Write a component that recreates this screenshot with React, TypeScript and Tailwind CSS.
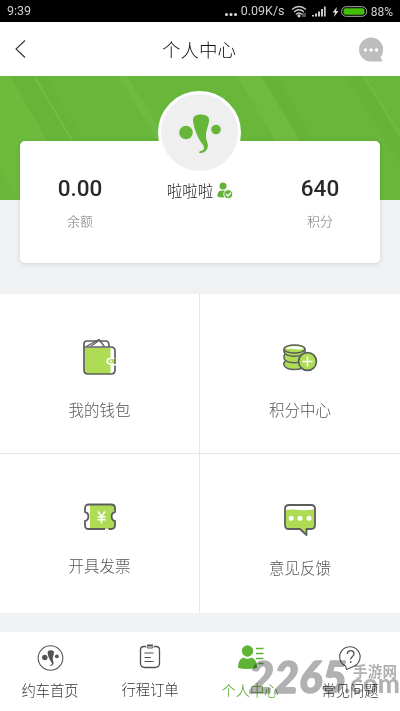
import React from 'react'

interface MenuItem {
  label: string
  icon: React.ReactNode
  cell: string
  labelGap: string
}

interface Tab {
  label: string
  icon: React.ReactNode
  active?: boolean
  offset: string
}

function LogoMark() {
  return (
    <>
      <circle cx="14" cy="37.500" r="6.800" />
      <circle cx="44" cy="34.500" r="4.800" />
      <path d="M21 25C20.500 18 36 18 37 24C37.500 29.500 33.500 35.500 34 41.500C34 46.500 37 48.500 35.500 53C34 57 31 58.500 27.500 58C26.500 57 27.500 56 29.500 55.700C33 55 32.500 51.500 30 48.500C26.500 44 21.500 33.500 21 25Z" />
    </>
  )
}

function WalletIcon() {
  return (
    <svg className="w-[36px] h-[38px]" viewBox="0 0 36 38" fill="none">
      <path d="M2.500 10H30V36H5L2.500 34Z" fill="#aedd55" />
      <path d="M28.500 10H31V36H28.500Z" fill="#fff" />
      <g stroke="#5c5e5d" strokeWidth="1.700" strokeLinecap="round" strokeLinejoin="round">
        <path d="M2 9V32Q2 36 6 36H29Q33 36 33 32V28M33 20V13Q33 9 29 9H2V6Q2 3 5 3H24Q27 3 27 8" />
        <path d="M5 8L17 1.500L22 8M9 8L15 4" strokeWidth="1.300" />
      </g>
      <path d="M33 20.500H28A2.700 2.700 0 0 0 28 26H33" fill="#aedd55" stroke="#fff" strokeWidth="1.700" />
      <path d="M33 20.500V26" stroke="#5c5e5d" strokeWidth="1.500" />
      <circle cx="29" cy="23.200" r="1" fill="#fff" />
    </svg>
  )
}

function CoinsIcon() {
  return (
    <svg className="w-[36px] h-[30px]" viewBox="0 0 36 30" fill="none" stroke="#5c5e5d" strokeWidth="1.500">
      <path d="M3 18Q1.500 19.500 2 22C4 28 21 28 23 22V18" fill="#aedd55" />
      <path d="M3 11Q1.500 13 2 15.500C4 21 21 21 23 15.500V12" fill="#aedd55" />
      <path d="M2 6V9C4 14.500 21 14.500 23 9V6" fill="#aedd55" />
      <ellipse cx="12.500" cy="6" rx="10.500" ry="4" fill="#aedd55" />
      <path d="M4 6C5 2.500 19 2.500 21.500 5.500C17 8 9 5 4 6Z" fill="#fff" stroke="none" />
      <circle cx="25.500" cy="18.500" r="8.900" fill="#aedd55" strokeWidth="1.700" />
      <path d="M25.500 13.500V23.500M20.500 18.500H30.500" stroke="#fff" strokeWidth="1.500" />
    </svg>
  )
}

function InvoiceIcon() {
  return (
    <svg className="w-[34px] h-[28px]" viewBox="0 0 34 28" fill="none">
      <path d="M7 1.500H28Q32 1.500 32 5V8C27 9 27 17 32 18V23Q32 26 28 26H7Z" fill="#aedd55" />
      <path d="M22 26H5Q2 26 2 22V18C6.500 17 6.500 10 2 9V5Q2 1.500 6 1.500H28Q32 1.500 32 5V9C27.500 10 27.500 17 32 18V22Q32 26 28 26H25.500" stroke="#5c5e5d" strokeWidth="1.800" strokeLinejoin="round" />
      <path d="M15 8.500L18.500 13.500L22 8.500M14.500 14H22.500M14.500 16.700H22.500M18.500 13.500V20.500" stroke="#fff" strokeWidth="1.500" />
    </svg>
  )
}

function FeedbackIcon() {
  return (
    <svg className="w-[34px] h-[34px]" viewBox="0 0 34 34" fill="none">
      <path d="M2.500 7C12 5 20 9 31.500 6V22Q31 26 28 26H23V31L16 26H6L2.500 23Z" fill="#aedd55" />
      <path d="M6 2H28Q32 2 32 6V22Q32 26 28 26H23.500V32L17 26H6Q2 26 2 22V6Q2 2 6 2Z" stroke="#5c5e5d" strokeWidth="1.800" strokeLinejoin="round" />
      <g fill="#fff">
        <circle cx="8.200" cy="15.300" r="2.500" />
        <circle cx="17" cy="15.300" r="2.500" />
        <circle cx="26" cy="15.300" r="2.500" />
      </g>
    </svg>
  )
}

const menuItems: MenuItem[] = [
  { label: '我的钱包', icon: <WalletIcon />, cell: 'border-r border-b pt-[44px]', labelGap: 'mt-[21px]' },
  { label: '积分中心', icon: <CoinsIcon />, cell: 'border-b pt-[49px]', labelGap: 'mt-[24px]' },
  { label: '开具发票', icon: <InvoiceIcon />, cell: 'border-r pt-[49px]', labelGap: 'mt-[22px]' },
  { label: '意见反馈', icon: <FeedbackIcon />, cell: 'pt-[49px]', labelGap: 'mt-[18px]' },
]

const tabs: Tab[] = [
  {
    label: '约车首页',
    offset: 'pt-[1px]',
    icon: (
      <svg className="w-[28px] h-[28px]" viewBox="0 0 28 28">
        <circle cx="14.500" cy="14" r="12.300" fill="none" stroke="#555" strokeWidth="1.100" />
        <g fill="#555" transform="translate(3.200 -1.500) scale(0.400)"><LogoMark /></g>
      </svg>
    ),
  },
  {
    label: '行程订单',
    offset: '',
    icon: (
      <svg className="w-[28px] h-[28px]" viewBox="0 0 28 28" fill="none" stroke="#505050">
        <path d="M10 3.500H8Q4.500 3.500 4.500 7V20Q4.500 24.500 9 24.500H19Q23.500 24.500 23.500 20V7Q23.500 3.500 20 3.500H18" strokeWidth="1.300" />
        <path d="M10 3.500Q11 5 12 5H16Q17 5 18 3.500M8.500 10H17.500M8.500 14.500H15M8.500 18.500H17.500" />
        <path d="M11 2.500H17" strokeWidth="2" />
      </svg>
    ),
  },
  {
    label: '个人中心',
    offset: 'pt-[1px]',
    active: true,
    icon: (
      <svg className="w-[28px] h-[28px]" viewBox="0 0 28 28" fill="#5fb336">
        <circle cx="11.500" cy="7" r="5.700" />
        <path d="M2 24Q2 15 7.500 13.500Q11.500 16 15.500 13.500Q21 15 21 24Q11.500 26 2 24Z" />
        <path d="M20 4.500H27.500M20 9.500H27.500M20 14.500H27.500M22.500 19.500H27.500" stroke="#5fb336" strokeWidth="1.500" />
      </svg>
    ),
  },
  {
    label: '常见问题',
    offset: 'pt-[1px]',
    icon: (
      <svg className="w-[28px] h-[28px]" viewBox="0 0 28 28" fill="none" stroke="#505050" strokeWidth="1.100">
        <path d="M10.500 25.500L9.800 22.300A10.200 10.200 0 1 1 18 22.300Z" strokeLinejoin="round" />
        <path d="M11.300 10C11.300 5.500 18 5.500 18 10C18 12.500 14.700 12.500 14.700 15.500M14.700 17V19" strokeWidth="1.300" />
      </svg>
    ),
  },
]

function StatusBar() {
  return (
    <div className="h-[22px] bg-black flex items-center justify-between pl-[7px] pr-[7px] pt-[1px] text-[12.500px] font-normal text-[#d0d0d0] font-[Roboto,sans-serif]">
      <span>9:39</span>
      <div className="flex items-center">
        <svg className="w-[14px] h-[12px] mr-[3px]" viewBox="0 0 14 12" fill="#ddd">
          <circle cx="2.500" cy="8.500" r="1.500" />
          <circle cx="7" cy="8.500" r="1.500" />
          <circle cx="11.500" cy="8.500" r="1.500" />
        </svg>
        <span className="w-[45px] text-[12.500px] whitespace-nowrap">0.09K/s</span>
        <svg className="w-[16px] h-[13px] ml-[5px]" viewBox="0 0 16 13" fill="none" stroke="#ccc" strokeWidth="1.300">
          <path d="M1 4.500Q8 -1.500 15 4.500M3 7Q8 2.500 13 7M5 9.500Q8 6.500 11 9.500" />
          <circle cx="8" cy="10.800" r="1" fill="#ccc" />
          <path d="M12 8V12M14 8V12" strokeWidth="0.800" />
        </svg>
        <svg className="w-[14px] h-[11px] ml-[5px]" viewBox="0 0 14 11" fill="#ccc">
          <path d="M0 9H2V10.500H0ZM3 7.500H5V10.500H3ZM6 5.500H8V10.500H6ZM9 3H11V10.500H9ZM12 0.500H13.700V10.500H12Z" />
        </svg>
        <svg className="w-[7px] h-[10px] ml-[6px]" viewBox="0 0 7 10" fill="#ddd">
          <path d="M5 0L0.500 5.500H3L2 10L6.500 4H4Z" />
        </svg>
        <svg className="w-[27px] h-[11px] ml-[2px] mr-[3px]" viewBox="0 0 27 11">
          <rect x="0.700" y="0.700" width="25" height="9.600" rx="4.500" fill="none" stroke="#aaa" />
          <rect x="2.500" y="2.200" width="21" height="6.600" rx="2" fill="#43be08" />
        </svg>
        <span className="text-[12px]">88%</span>
      </div>
    </div>
  )
}

function Header() {
  return (
    <header className="h-[54px] flex items-center justify-between pl-[15px] pr-[17px] bg-white">
      <svg className="w-[24px] h-[20px]" viewBox="0 0 24 20" fill="none" stroke="#333" strokeWidth="1.100">
        <path d="M10 1.500L1 10L10 18.500" />
      </svg>
      <h1 className="pt-[1px] text-[18.500px] text-[#111]">个人中心</h1>
      <svg className="w-[24px] h-[25px]" viewBox="0 0 24 25">
        <path d="M12 0.500A12 12 0 1 0 12 24.500H23.500L21.500 20A12 12 0 0 0 12 0.500Z" fill="#bebebe" />
        <g fill="#fff">
          <circle cx="6.500" cy="13" r="1.700" />
          <circle cx="12" cy="13" r="1.700" />
          <circle cx="17.500" cy="13" r="1.700" />
        </g>
      </svg>
    </header>
  )
}

function Stat({ value, label }: { value: string; label: string }) {
  return (
    <div className="w-[120px] flex flex-col items-center pt-[33px]">
      <span className="h-[28px] leading-[28px] text-[22.500px] font-medium text-[#292929] font-[Roboto,sans-serif]">{value}</span>
      <span className="mt-[9px] h-[20px] leading-[20px] text-[13px] text-[#777]">{label}</span>
    </div>
  )
}

function Profile() {
  return (
    <section className="relative h-[218px] bg-[#f0f1f3] px-[20px] pt-[65px]">
      <svg className="absolute left-0 top-0 w-full h-[124px]" viewBox="0 0 400 124">
        <rect width="400" height="124" fill="#68b63a" />
        <path d="M0 0H10L82 124H18L0 92Z" fill="#6dba3d" />
        <path d="M10 0L82 124H120L46 0Z" fill="#65b339" opacity=".4" />
        <path d="M34 0L73 66" stroke="#72bd42" strokeWidth="2" />
        <path d="M118 0L158 66H168L127 0Z" fill="#6eba42" />
        <path d="M237 0H261L301 66H276Z" fill="#6fbb40" />
        <path d="M261 0H277L315 66H301Z" fill="#65b439" />
        <path d="M346 0L400 89V63L362 0Z" fill="#65b439" />
        <path d="M364 0L400 59" stroke="#72bd42" strokeWidth="1.500" />
      </svg>
      <div className="relative h-[122px] flex bg-white rounded-[5px] shadow-[0_1px_5px_rgba(0,0,0,0.12)]">
        <Stat value="0.00" label="余额" />
        <div className="w-[120px] flex flex-col items-center">
          <div className="-mt-[50px] w-[83px] h-[83px] -ml-px shrink-0 rounded-full bg-[#eeefee] border-[3px] border-white flex items-center justify-center">
            <svg className="w-[56px] h-[76px]" viewBox="0 0 56 76" fill="#66b63a">
              <LogoMark />
            </svg>
          </div>
          <div className="mt-[5px] flex items-center gap-[4px] text-[15.500px] leading-[22px] text-[#222]">
            <span>啦啦啦</span>
            <svg className="w-[16px] h-[17px]" viewBox="0 0 16 17" fill="#62b337">
              <circle cx="6" cy="4" r="3.500" />
              <path d="M0.500 14.500Q0 9 4.500 8.500H8Q10 9 11 10L9 15Q3 16 0.500 14.500Z" />
              <circle cx="11.300" cy="12.200" r="4.500" stroke="#fff" />
              <path d="M9 12L11 14L14 10.500" fill="none" stroke="#fff" strokeWidth="1.200" />
            </svg>
          </div>
        </div>
        <Stat value="640" label="积分" />
      </div>
    </section>
  )
}

function Watermark() {
  return (
    <svg className="absolute left-[240px] top-[650px] w-[160px] h-[55px] mix-blend-multiply" viewBox="0 0 160 55" fill="#b1b1b1">
      <text x="9" y="43" fontSize="44" fontWeight="900" fontStyle="italic" fontFamily="Lato, sans-serif" textLength="98" lengthAdjust="spacingAndGlyphs" stroke="#b1b1b1" strokeWidth="1.500" strokeLinejoin="round">2265</text>
      <text x="113" y="27" fontSize="14.500" fontWeight="700" fontFamily="Noto Sans CJK SC, sans-serif" textLength="44">手游网</text>
      <text x="104" y="43" fontSize="27" fontWeight="900" fontFamily="Lato, sans-serif" textLength="56" lengthAdjust="spacingAndGlyphs">.com</text>
    </svg>
  )
}

export default function App() {
  return (
    <div className="relative w-[400px] h-[711px] overflow-hidden bg-[#f0f1f3] font-['Noto_Sans_CJK_SC',sans-serif] font-light">
      <StatusBar />
      <Header />
      <Profile />
      <div className="h-[319px] grid grid-cols-2 grid-rows-[160px_159px] bg-white">
        {menuItems.map((item) => (
          <div key={item.label} className={`flex flex-col items-center border-[#e6e6e6] ${item.cell}`}>
            {item.icon}
            <span className={`text-[15.500px] leading-[24px] text-[#555] ${item.labelGap}`}>{item.label}</span>
          </div>
        ))}
      </div>
      <nav className="mt-[19px] h-[79px] flex bg-white pt-[11px]">
        {tabs.map((tab) => (
          <div key={tab.label} className={`flex-1 flex flex-col items-center ${tab.offset}`}>
            {tab.icon}
            <span className={`mt-[7px] text-[14.300px] leading-[22px] ${tab.active ? 'text-[#4fa826]' : 'text-[#333]'}`}>{tab.label}</span>
          </div>
        ))}
      </nav>
      <Watermark />
    </div>
  )
}
